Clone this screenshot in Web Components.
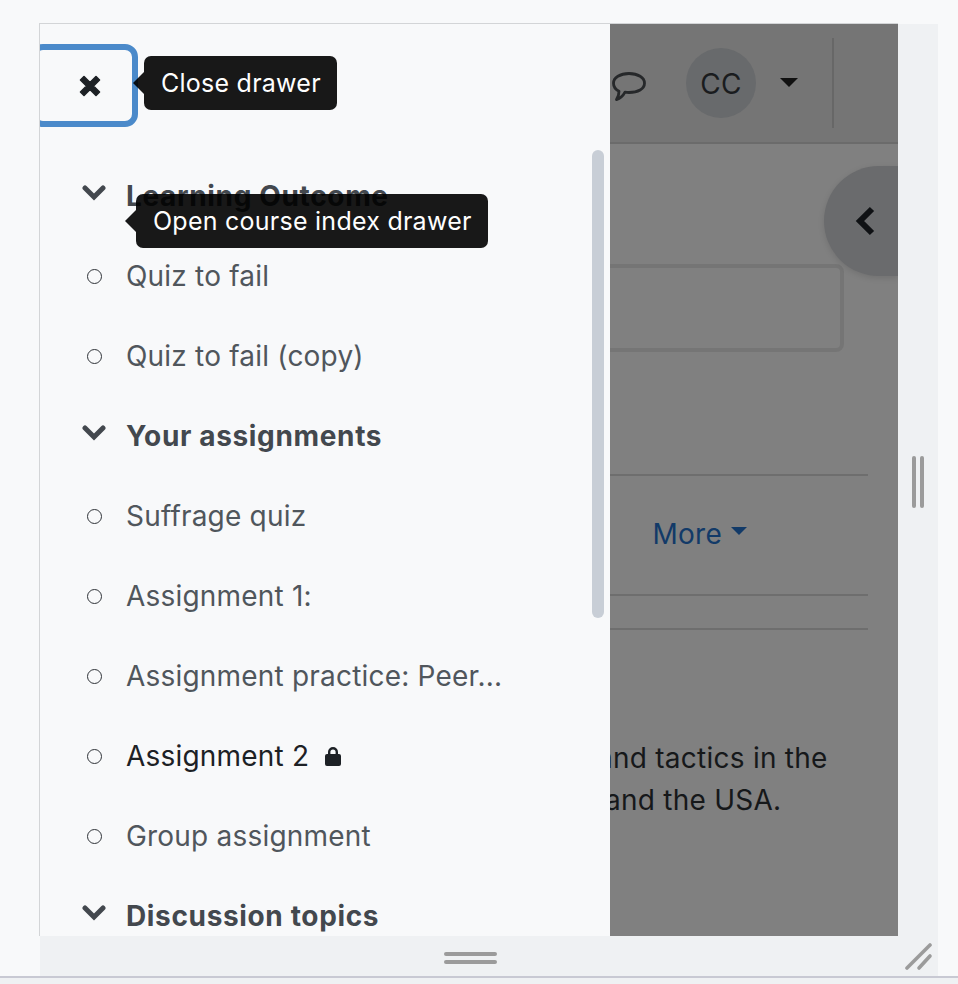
<!DOCTYPE html>
<html>
<head>
<meta charset="utf-8">
<title>Course index drawer</title>
<style>
  html, body { margin: 0; height: 984px; overflow: hidden; }
  body { background: #f8f9fa; font-family: Inter, "Liberation Sans", sans-serif; }
</style>
</head>
<body>
<resize-frame>
  <page-header></page-header>
  <page-body></page-body>
  <course-drawer>
    <drawer-section label="Learning Outcome"></drawer-section>
    <drawer-item label="Quiz to fail"></drawer-item>
    <drawer-item label="Quiz to fail (copy)"></drawer-item>
    <drawer-section label="Your assignments"></drawer-section>
    <drawer-item label="Suffrage quiz"></drawer-item>
    <drawer-item label="Assignment 1:"></drawer-item>
    <drawer-item label="Assignment practice: Peer..."></drawer-item>
    <drawer-item label="Assignment 2" locked></drawer-item>
    <drawer-item label="Group assignment"></drawer-item>
    <drawer-section label="Discussion topics"></drawer-section>
  </course-drawer>
  <dark-tooltip style="left:104px;top:32px" text="Close drawer"></dark-tooltip>
  <dark-tooltip style="left:96px;top:170px" text="Open course index drawer"></dark-tooltip>
</resize-frame>

<script>
class ResizeFrame extends HTMLElement {
    constructor() {
        super();
        this.attachShadow({mode: 'open'});
        this.shadowRoot.innerHTML = `
        <style>
            :host { display: block; width: 899px; margin: 23px 0 0 39px; }
            .grid { display: grid; grid-template-columns: 859px 40px; grid-template-rows: 913px 40px; }
            .view { position: relative; overflow: hidden; background: #808080; border-left: 1px solid #d3d5d7; border-top: 1px solid #d3d5d7; }
            .side { background: #eff1f3; display: flex; justify-content: center; align-items: flex-start; gap: 4px; padding-top: 432px; margin-top: 1px; box-sizing: border-box; height: 912px; }
            .side i { display: block; width: 4px; height: 52px; border-radius: 2px; background: #9b9b9b; }
            .bottom { grid-column: 1 / 3; margin-left: 1px; background: #eff1f3; position: relative; display: flex; flex-direction: column; align-items: center; gap: 4px; padding: 16px 0 0 0; box-sizing: border-box; }
            .bottom i { display: block; width: 53px; height: 4px; border-radius: 2px; background: #9b9b9b; position: relative; left: -19px; }
            .bottom svg { position: absolute; right: 5px; top: 7px; }
            .foot { position: fixed; left: 0; right: 0; top: 976px; height: 8px; background: #eff1f3; border-top: 2px solid #c8c9d3; box-sizing: border-box; }
        </style>
        <div class="grid">
            <div class="view"><slot></slot></div>
            <div class="side"><i></i><i></i></div>
            <div class="bottom">
                <i></i><i></i>
                <svg width="28" height="28" viewBox="0 0 28 28" fill="none" stroke="#9b9b9b" stroke-width="3.6" stroke-linecap="round">
                    <path d="M2 25 L25 2"/><path d="M14 25 L25 13"/>
                </svg>
            </div>
        </div>
        <div class="foot"></div>
        `;
    }
}

class PageHeader extends HTMLElement {
    constructor() {
        super();
        this.attachShadow({mode: 'open'});
        this.shadowRoot.innerHTML = `
        <style>
            :host { display: flex; justify-content: flex-end; align-items: center; height: 120px; box-sizing: border-box; background: #757575; border-bottom: 2px solid #6b6b6b; padding-right: 64px; color: #1a1c1e; }
            svg.chat { margin-right: 40px; margin-top: 8px; }
            .avatar { width: 70px; height: 70px; border-radius: 50%; background: #686a6c; display: flex; align-items: center; justify-content: center; font-size: 28px; letter-spacing: .2px; padding-top: 2px; box-sizing: border-box; }
            .caret { width: 0; height: 0; border: 9px solid transparent; border-top-color: #111; border-bottom-width: 0; margin: 0 34px 0 24px; position: relative; top: -1px; }
            .divider { width: 2px; height: 90px; background: #676767; }
        </style>
        <svg class="chat" width="34" height="32" viewBox="0 0 34 32" fill="none" stroke="#26282a" stroke-width="2.8" stroke-linejoin="round">
            <path d="M17 2.5 C26 2.5 32.5 6.6 32.5 12.2 C32.5 17.8 26 21.5 17 21.5 C15.6 21.5 14.2 21.4 13 21.2 C11 25 8 27.6 4.5 28.6 C6.2 26 7 23.6 7 20.2 C3.5 18.4 1.5 15.6 1.5 12.2 C1.5 6.6 8 2.5 17 2.5 Z"/>
        </svg>
        <div class="avatar">CC</div>
        <div class="caret"></div>
        <div class="divider"></div>
        `;
    }
}

class PageBody extends HTMLElement {
    constructor() {
        super();
        this.attachShadow({mode: 'open'});
        this.shadowRoot.innerHTML = `
        <style>
            :host { display: block; position: relative; padding: 120px 30px 0 0; height: 792px; box-sizing: border-box; color: #16181a; font-size: 28px; letter-spacing: .25px; }
            .search { height: 88px; margin-right: 24px; border: 4px solid #757575; border-radius: 8px; box-sizing: border-box; }
            .rule { height: 2px; background: #6e6e6e; }
            .tabs { display: flex; justify-content: flex-end; align-items: center; height: 118px; padding: 0 121px 2px 0; box-sizing: border-box; color: #123a68; gap: 9px; }
            .tabs i { width: 0; height: 0; border: 8px solid transparent; border-top-color: #123a68; border-bottom-width: 0; position: relative; top: -3px; }
            .gap { height: 32px; }
            .text { margin: 107px 0 0 0; line-height: 42px; white-space: nowrap; }
            .text div:first-child { padding-left: 557px; }
            .text div:last-child { padding-left: 565px; }
            .chevron { position: absolute; right: 0; top: 22px; width: 74px; height: 110px; border-radius: 55px 0 0 55px; background: #6a6b6d; box-shadow: 0 2px 6px rgba(0,0,0,.12); display: flex; align-items: center; padding-left: 31px; box-sizing: border-box; }
        </style>
        <div class="chevron">
            <svg width="20" height="30" viewBox="0 0 20 30" fill="none" stroke="#0f1114" stroke-width="6" stroke-linejoin="miter">
                <path d="M17 3 L5 15 L17 27"/>
            </svg>
        </div>
        <div class="search"></div>
        <div style="height:122px"></div>
        <div class="rule"></div>
        <div class="tabs">More <i></i></div>
        <div class="rule"></div>
        <div class="gap"></div>
        <div class="rule"></div>
        <div class="text">
            <div>and tactics in the</div>
            <div>and the USA.</div>
        </div>
        `;
    }
}

class CourseDrawer extends HTMLElement {
    constructor() {
        super();
        this.attachShadow({mode: 'open'});
        this.shadowRoot.innerHTML = `
        <style>
            :host { display: block; position: absolute; left: 0; top: 0; width: 570px; height: 912px; background: #f8f9fa; box-sizing: border-box; overflow: hidden; }
            .close { display: flex; align-items: center; justify-content: center; width: 108px; height: 83px; margin: 20px 0 0 -10px; padding-left: 12px; border: 6px solid #4b8aca; border-radius: 13px; box-sizing: border-box; background: #f8f9fa; }
            .list { margin-top: 29px; }
            .thumb { position: absolute; left: 552px; top: 126px; width: 12px; height: 468px; border-radius: 6px; background: #c8ced6; }
        </style>
        <div class="close">
            <svg width="22" height="22" viewBox="0 0 22 22" fill="#1d2125" stroke="#1d2125" stroke-width="1.6" stroke-linejoin="round">
                <path d="M5 1.5 L11 7.5 L17 1.5 L20.5 5 L14.5 11 L20.5 17 L17 20.5 L11 14.5 L5 20.5 L1.5 17 L7.5 11 L1.5 5 Z"/>
            </svg>
        </div>
        <div class="list"><slot></slot></div>
        <div class="thumb"></div>
        `;
    }
}

class DrawerSection extends HTMLElement {
    constructor() {
        super();
        this.attachShadow({mode: 'open'});
        this.shadowRoot.innerHTML = `
        <style>
            :host { display: flex; align-items: center; height: 80px; color: #43484e; font-size: 28px; font-weight: 700; letter-spacing: .65px; white-space: nowrap; }
            svg { flex: none; margin: -6px 20px 0 42px; }
        </style>
        <svg width="24" height="16" viewBox="0 0 24 16" fill="none" stroke="#43484e" stroke-width="5" stroke-linecap="round" stroke-linejoin="miter">
            <path d="M3 3 L12 12 L21 3"/>
        </svg>
        <span>${this.getAttribute('label')}</span>
        `;
    }
}

class DrawerItem extends HTMLElement {
    constructor() {
        super();
        this.attachShadow({mode: 'open'});
        const locked = this.hasAttribute('locked');
        this.shadowRoot.innerHTML = `
        <style>
            :host { display: flex; align-items: center; height: 80px; color: ${locked ? '#1d2125' : '#50565c'}; font-size: 28px; letter-spacing: .2px; white-space: nowrap; }
            .dot { flex: none; width: 15px; height: 15px; margin: 0 24px 0 47px; border: 1.6px solid #2f3338; border-radius: 50%; box-sizing: border-box; }
            svg { margin-left: 16px; }
        </style>
        <div class="dot"></div>
        <span>${this.getAttribute('label')}</span>
        ${locked ? `<svg width="16" height="20" viewBox="0 0 16 20" fill="#1d2125">
            <path d="M3 8 V6 a5 5 0 0 1 10 0 V8 H14 a2 2 0 0 1 2 2 V18 a2 2 0 0 1 -2 2 H2 a2 2 0 0 1 -2 -2 V10 a2 2 0 0 1 2 -2 Z M5.4 8 H10.6 V6 a2.6 2.6 0 0 0 -5.2 0 Z" fill-rule="evenodd"/>
        </svg>` : ''}
        `;
    }
}

class DarkTooltip extends HTMLElement {
    constructor() {
        super();
        this.attachShadow({mode: 'open'});
        this.shadowRoot.innerHTML = `
        <style>
            :host { display: block; position: absolute; height: 54px; line-height: 54px; padding: 0 16px 0 17px; background: #000; color: #fff; opacity: .9; border-radius: 7px; font-size: 25px; letter-spacing: .25px; white-space: nowrap; }
            .arrow { position: absolute; left: -11px; top: 16px; width: 0; height: 0; border: 11px solid transparent; border-right-color: #000; border-left-width: 0; }
        </style>
        <div class="arrow"></div>
        ${this.getAttribute('text')}
        `;
    }
}

customElements.define('resize-frame', ResizeFrame);
customElements.define('page-header', PageHeader);
customElements.define('page-body', PageBody);
customElements.define('course-drawer', CourseDrawer);
customElements.define('drawer-section', DrawerSection);
customElements.define('drawer-item', DrawerItem);
customElements.define('dark-tooltip', DarkTooltip);
</script>
</body>
</html>
